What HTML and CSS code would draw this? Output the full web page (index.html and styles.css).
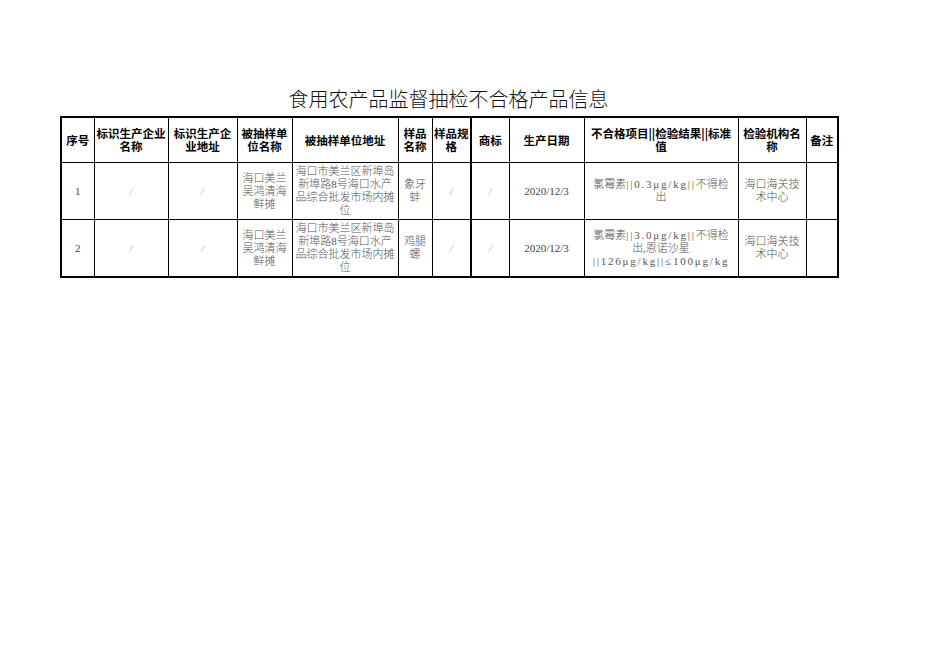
FILE: index.html
```html
<!DOCTYPE html>
<html lang="zh">
<head>
<meta charset="utf-8">
<title>食用农产品监督抽检不合格产品信息</title>
<link rel="stylesheet" href="styles.css">
</head>
<body>
<div class="sheet">
  <div class="title">食用农产品监督抽检不合格产品信息</div>
  <table class="grid">
    <colgroup>
      <col class="c1"><col class="c2"><col class="c3"><col class="c4"><col class="c5"><col class="c6"><col class="c7"><col class="c8"><col class="c9"><col class="c10"><col class="c11"><col class="c12">
    </colgroup>
    <thead>
      <tr>
        <th>序号</th>
        <th>标识生产企业名称</th>
        <th>标识生产企业地址</th>
        <th>被抽样单位名称</th>
        <th>被抽样单位地址</th>
        <th>样品名称</th>
        <th class="thick-r">样品规格</th>
        <th>商标</th>
        <th>生产日期</th>
        <th class="wide-h">不合格项目||检验结果||标准值</th>
        <th>检验机构名称</th>
        <th>备注</th>
      </tr>
    </thead>
    <tbody>
      <tr>
        <td class="num">1</td>
        <td class="slash">/</td>
        <td class="slash">/</td>
        <td>海口美兰吴鸿清海鲜摊</td>
        <td>海口市美兰区新埠岛新埠路8号海口水产品综合批发市场内摊位</td>
        <td>象牙蚌</td>
        <td class="slash thick-r">/</td>
        <td class="slash">/</td>
        <td class="num">2020/12/3</td>
        <td class="spec">氯霉素<span class="lat">||0.3μg/kg||</span>不得检<br>出</td>
        <td>海口海关技术中心</td>
        <td></td>
      </tr>
      <tr>
        <td class="num">2</td>
        <td class="slash">/</td>
        <td class="slash">/</td>
        <td>海口美兰吴鸿清海鲜摊</td>
        <td>海口市美兰区新埠岛新埠路8号海口水产品综合批发市场内摊位</td>
        <td>鸡腿螺</td>
        <td class="slash thick-r">/</td>
        <td class="slash">/</td>
        <td class="num">2020/12/3</td>
        <td class="spec">氯霉素<span class="lat">||3.0μg/kg||</span>不得检<br>出,恩诺沙星<br><span class="lat">||126μg/kg||≤100μg/kg</span></td>
        <td>海口海关技术中心</td>
        <td></td>
      </tr>
    </tbody>
  </table>
</div>
</body>
</html>
```

FILE: styles.css
```css
html, body {
  margin: 0;
  padding: 0;
  background: #ffffff;
}

.sheet {
  padding: 86px 0 0 60px;
  width: 777px;
  font-family: "Liberation Serif", "Noto Sans CJK SC", serif;
}

.title {
  width: 777px;
  height: 30px;
  line-height: 28px;
  text-align: center;
  font-size: 20px;
  color: #111;
  font-family: "Liberation Serif", "Noto Sans CJK SC", serif;
  font-weight: 300;
}

.grid {
  border-collapse: collapse;
  table-layout: fixed;
  width: 777px;
  border: 2px solid #000;
}

.c1 { width: 33px; }
.c2 { width: 74px; }
.c3 { width: 69px; }
.c4 { width: 55px; }
.c5 { width: 106px; }
.c6 { width: 34px; }
.c7 { width: 39px; }
.c8 { width: 38px; }
.c9 { width: 75px; }
.c10 { width: 154px; }
.c11 { width: 68px; }
.c12 { width: 32px; }

.grid th,
.grid td {
  border: 1px solid #000;
  padding: 0 2px;
  text-align: center;
  vertical-align: middle;
  font-size: 11px;
  line-height: 13px;
  overflow: hidden;
  word-break: break-all;
}

.grid th {
  height: 44px;
  padding: 0 1px;
  font-family: "Noto Sans CJK SC", sans-serif;
  font-size: 11.5px;
  font-weight: 700;
  color: #000;
  line-height: 13px;
}

.grid th.wide-h {
  padding: 0 6px;
}

.grid td {
  height: 56px;
  color: #555;
  font-family: "Liberation Serif", "Noto Sans CJK SC", serif;
  font-weight: 300;
}

.grid .thick-r {
  border-right: 2px solid #000;
}

.grid td.slash {
  color: #aaa;
  font-style: italic;
}

.grid td.num {
  color: #444;
}

.grid td.spec {
  padding: 0;
  white-space: nowrap;
}

.lat {
  font-family: "Liberation Serif", serif;
  letter-spacing: 1.8px;
}
```
